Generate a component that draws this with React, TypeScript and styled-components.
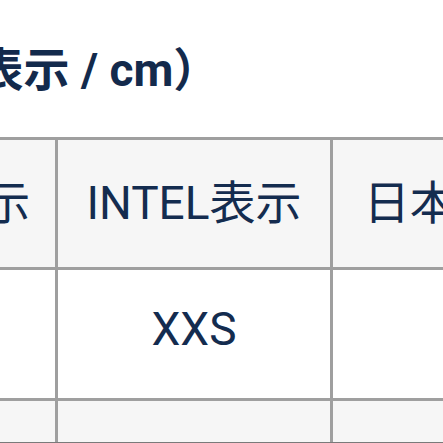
import React from 'react';
import styled, { createGlobalStyle } from 'styled-components';

const GlobalStyle = createGlobalStyle`
  html, body {
    margin: 0;
    padding: 0;
    background: #ffffff;
    overflow: hidden;
  }
  body {
    font-family: Roboto, "Noto Sans CJK JP", sans-serif;
    color: #142c4f;
  }
`;

// the screenshot is a crop of a wider page, so the sheet starts left of the window
const Viewport = styled.div`
  box-sizing: border-box;
  width: 443px;
  height: 443px;
  overflow: hidden;
  border-bottom: 1px solid #7a7a7a;
`;

const Sheet = styled.div`
  margin-left: -343px;
  width: 1200px;
`;

const Title = styled.h2`
  margin: 42px 0 0 0;
  font-size: 46px;
  line-height: 56px;
  font-weight: 700;
  white-space: nowrap;
  color: #132a4c;
`;

const SizeTable = styled.div`
  margin: 39px 0 0 195px;
  display: grid;
  grid-template-columns: 200px 272px 290px;
  grid-auto-rows: 127px 128px 128px;
  gap: 3px;
  padding: 3px;
  width: max-content;
  background: #9f9f9f;
`;

const Cell = styled.div<{ $head?: boolean; $shade?: boolean }>`
  display: flex;
  align-items: center;
  justify-content: center;
  padding-bottom: 10px;
  box-sizing: border-box;
  font-size: 46px;
  font-weight: 400;
  white-space: nowrap;
  background: ${({ $head, $shade }) => ($head || $shade ? '#f6f6f6' : '#ffffff')};
  color: #142c4f;
`;

const rows = [
  ['UK表示', 'INTEL表示', '日本サイズ'],
  ['4', 'XXS', '3'],
  ['6', 'XS', '5'],
];

const App = () => (
  <Viewport>
    <GlobalStyle />
    <Sheet>
      <Title>サイズ表（日本表示 / cm）</Title>
      <SizeTable>
        {rows.map((row, r) =>
          row.map((text, c) => (
            <Cell key={`${r}-${c}`} $head={r === 0} $shade={r === 2}>
              {text}
            </Cell>
          ))
        )}
      </SizeTable>
    </Sheet>
  </Viewport>
);

export default App;
